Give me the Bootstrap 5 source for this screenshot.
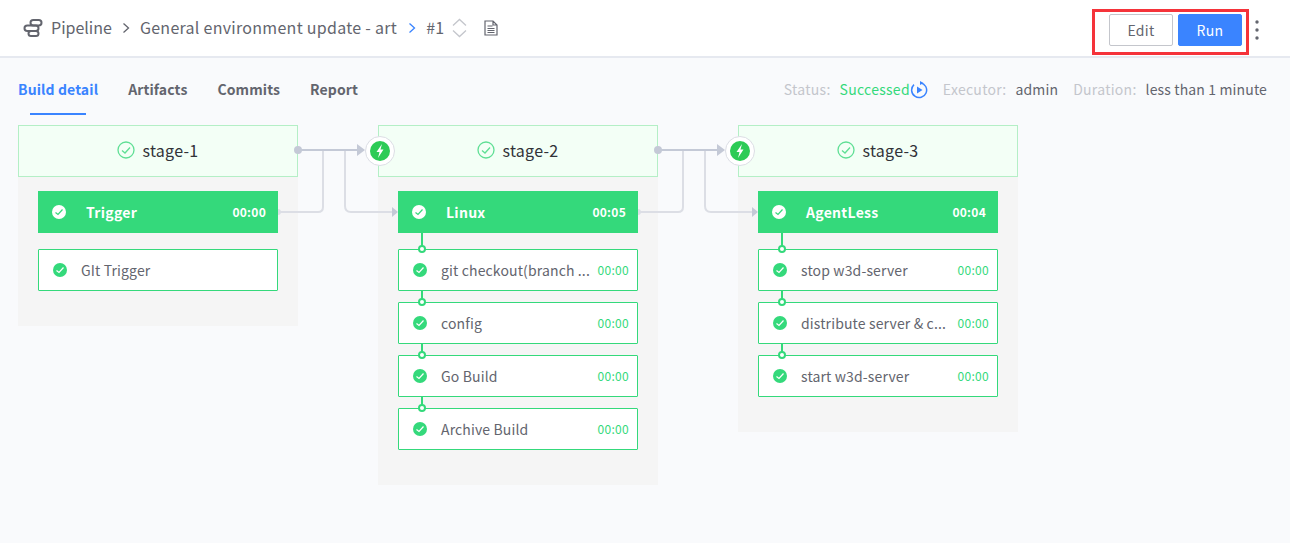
<!DOCTYPE html>
<html lang="en">
<head>
<meta charset="utf-8">
<title>Pipeline build</title>
<link href="https://cdn.jsdelivr.net/npm/bootstrap@5.3.0/dist/css/bootstrap.min.css" rel="stylesheet">
<script src="https://cdn.jsdelivr.net/npm/bootstrap@5.3.0/dist/js/bootstrap.bundle.min.js"></script>
<style>
html,body{height:100%;overflow:hidden}
body{font-family:"Noto Sans CJK SC","Noto Sans",sans-serif;background:#f9fafc;color:#63656e;font-size:14px;letter-spacing:.02em}
.topbar{height:58px;background:#fff;border-bottom:2px solid #e6e9f0;padding:0 31px 0 23px}
.crumb{font-size:16px;color:#63656e;line-height:24px;margin-top:-3px}
.crumb-root{letter-spacing:0}
.crumb-sep{margin:0 9px 0 9px;flex:none}
.crumb-sep-active{margin-left:10px}
.action-box{border:3px solid #f5333a;height:46px;width:157px;padding:0 4px 4px 14px;margin-top:8px;gap:5px}
.act-btn{height:32px;width:64px;padding:0;font-size:14px;border-radius:2px;line-height:28px;letter-spacing:.02em}
.act-edit{background:#fff;border:1px solid #c4c6cc;color:#63656e}
.act-run{background:#3a84ff;border:1px solid #3a84ff;color:#fff}
.act-edit:hover{background:#fff;border-color:#c4c6cc;color:#63656e}
.act-run:hover{background:#3a84ff;border-color:#3a84ff;color:#fff}
.tabrow{height:67px;padding:0 23px 0 18px}
.tab-link{font-size:14px;font-weight:700;color:#63656e;position:relative;height:57px;line-height:62px;margin-right:30px;letter-spacing:.008em}
.tab-active{color:#3a84ff}
.tab-active::after{content:"";position:absolute;left:12px;right:12px;bottom:0;height:2px;background:#3a84ff}
.meta-row{margin-top:21px}
.meta-label{color:#c4c6cc}
.meta-gap{margin-left:15px}
.meta-ok{color:#34d97b;margin-left:9px}
.meta-val{margin-left:9px;letter-spacing:.01em}
.canvas{padding-left:18px;gap:80px;align-items:flex-start}
.stage-col{width:280px;background:#f5f5f5;position:relative;padding-bottom:24px}
.stage-head{height:52px;background:#f3fff6;border:1px solid #b4efc6;font-size:16px;color:#313238;gap:7px;padding-bottom:2px}
.job-bar{height:42px;background:#34d97b;color:#fff;margin:14px 20px 16px;font-weight:700;padding:0 12px 0 14px;position:relative}
.job-name{margin-left:20px;font-size:14px}
.job-time{font-size:12px;margin-left:auto}
.task-item{height:42px;background:#fff;border:1px solid #34d97b;border-radius:1px;margin:0 20px 11px;padding:0 8px 0 14px;position:relative}
.task-name{margin-left:14px;white-space:nowrap;font-size:14px;letter-spacing:.01em}
.task-time{font-size:12px;color:#34d97b;margin-left:auto}
.task-link::before{content:"";position:absolute;left:22px;top:-12px;width:2px;height:12px;background:#34d97b}
.job-bar + .task-link::before{top:-17px;height:17px}
.task-link::after{content:"";position:absolute;left:19px;top:-5px;width:8px;height:8px;border:2px solid #34d97b;border-radius:50%;background:#fff}
.wire{position:absolute;left:280px;top:0;overflow:visible;pointer-events:none;z-index:1}
.job-wire{position:absolute;left:-20px;top:11px;overflow:visible;z-index:2}
.pipe-ico,.doc-ico,.sort-ico,.dots-ico{flex:none}
.sort-ico{margin-left:8px}
.doc-ico{margin-left:17px}
.dots-ico{margin-left:6px;margin-top:4px}
</style>
</head>
<body>
<header class="topbar d-flex align-items-center">
  <svg class="pipe-ico" width="20" height="20" viewBox="0 0 20 20" fill="none" stroke="#63656e" stroke-width="2"><rect x="7.500" y="2" width="11" height="5.500" rx="2.750"/><rect x="1.500" y="7.500" width="14" height="5.500" rx="2.750"/><rect x="5.500" y="13" width="10" height="5" rx="2.500"/></svg>
  <span class="crumb crumb-root ms-2">Pipeline</span>
  <svg class="crumb-sep" width="10" height="12" viewBox="0 0 10 12" fill="none" stroke="#63656e" stroke-width="1.300"><path d="M2.500 1.500 7.500 6 2.500 10.500"/></svg>
  <span class="crumb">General environment update - art</span>
  <svg class="crumb-sep crumb-sep-active" width="10" height="12" viewBox="0 0 10 12" fill="none" stroke="#3a84ff" stroke-width="1.300"><path d="M2.500 1.500 7.500 6 2.500 10.500"/></svg>
  <span class="crumb">#1</span>
  <svg class="sort-ico" width="15" height="20" viewBox="0 0 15 20" fill="none" stroke="#c4c6cc" stroke-width="1.300"><path d="M1 7.500 7.500 1.500 14 7.500M1 12.500 7.500 18.500 14 12.500"/></svg>
  <svg class="doc-ico" width="14" height="16" viewBox="0 0 14 16" fill="none" stroke="#63656e" stroke-width="1.200"><path d="M1 1h8l4 4v10H1zM9 1v4h4M3.500 6h5M3.500 8.500h7M3.500 10.500h7M3.500 12.500h7"/></svg>
  <div class="ms-auto d-flex align-items-center">
    <div class="action-box d-flex align-items-center">
      <button type="button" class="btn act-btn act-edit">Edit</button>
      <button type="button" class="btn act-btn act-run">Run</button>
    </div>
    <svg class="dots-ico" width="4" height="20" viewBox="0 0 4 20" fill="#63656e"><circle cx="2" cy="2" r="1.700"/><circle cx="2" cy="10" r="1.700"/><circle cx="2" cy="18" r="1.700"/></svg>
  </div>
</header>
<div class="tabrow d-flex justify-content-between align-items-start">
  <nav class="d-flex">
    <a class="tab-link tab-active text-decoration-none" href="#">Build detail</a>
    <a class="tab-link text-decoration-none" href="#">Artifacts</a>
    <a class="tab-link text-decoration-none" href="#">Commits</a>
    <a class="tab-link text-decoration-none" href="#">Report</a>
  </nav>
  <div class="d-flex align-items-center meta-row">
    <span class="meta-label">Status:</span>
    <span class="meta-ok">Successed</span>
    <svg width="18" height="18" viewBox="0 0 18 18" fill="none"><path d="M10.500 1.700A7.500 7.500 0 1 1 4 3.600" stroke="#3a84ff" stroke-width="1.500"/><path d="M10 0 13.500 2 10 4z" fill="#3a84ff"/><path d="M7 5.500 12.500 9 7 12.500z" fill="#3a84ff"/></svg>
    <span class="meta-label meta-gap">Executor:</span>
    <span class="meta-val">admin</span>
    <span class="meta-label meta-gap">Duration:</span>
    <span class="meta-val">less than 1 minute</span>
  </div>
</div>
<main class="canvas d-flex">
  <section class="stage-col">
    <div class="stage-head d-flex align-items-center justify-content-center"><svg width="18" height="18" viewBox="0 0 18 18" fill="none" stroke="#5fdf95" stroke-width="1.300"><circle cx="9" cy="9" r="8"/><path d="M5 9.500 8 12 13 6.500"/></svg>stage-1</div>
    <div class="job-bar d-flex align-items-center"><svg width="14" height="14" viewBox="0 0 14 14"><circle cx="7" cy="7" r="7" fill="#fff"/><path d="M3.500 7.500 6 9.500 10.500 4.500" fill="none" stroke="#34d97b" stroke-width="1.200"/></svg><span class="job-name">Trigger</span><span class="job-time">00:00</span></div>
    <div class="task-item d-flex align-items-center"><svg width="14" height="14" viewBox="0 0 14 14"><circle cx="7" cy="7" r="7" fill="#34d97b"/><path d="M3.500 7.500 6 9.500 10.500 4.500" fill="none" stroke="#fff" stroke-width="1.200"/></svg><span class="task-name">GIt Trigger</span></div>
    <svg class="wire" width="100" height="100" fill="none">
      <path d="M-20 84a3 3 0 0 1 0 6z" fill="#dcdee5"/>
      <path d="M-20 87H20Q25 87 25 82V25" stroke="#dcdee5" stroke-width="2"/>
      <path d="M47 25V81Q47 87 53 87H94" stroke="#dcdee5" stroke-width="2"/>
      <circle cx="0" cy="25" r="4" fill="#c4c9d6"/>
      <path d="M0 25H60" stroke="#c4c9d6" stroke-width="2"/>
      <path d="M59 19 67 25 59 31z" fill="#c4c9d6"/>
      <path d="M94 82 100 87 94 92z" fill="#c4c9d6"/>
    </svg>
  </section>
  <section class="stage-col">
    <div class="stage-head d-flex align-items-center justify-content-center"><svg width="18" height="18" viewBox="0 0 18 18" fill="none" stroke="#5fdf95" stroke-width="1.300"><circle cx="9" cy="9" r="8"/><path d="M5 9.500 8 12 13 6.500"/></svg>stage-2</div>
    <div class="job-bar d-flex align-items-center"><svg width="14" height="14" viewBox="0 0 14 14"><circle cx="7" cy="7" r="7" fill="#fff"/><path d="M3.500 7.500 6 9.500 10.500 4.500" fill="none" stroke="#34d97b" stroke-width="1.200"/></svg><span class="job-name">Linux</span><span class="job-time">00:05</span></div>
    <div class="task-item task-link d-flex align-items-center"><svg width="14" height="14" viewBox="0 0 14 14"><circle cx="7" cy="7" r="7" fill="#34d97b"/><path d="M3.500 7.500 6 9.500 10.500 4.500" fill="none" stroke="#fff" stroke-width="1.200"/></svg><span class="task-name">git checkout(branch ...</span><span class="task-time">00:00</span></div>
    <div class="task-item task-link d-flex align-items-center"><svg width="14" height="14" viewBox="0 0 14 14"><circle cx="7" cy="7" r="7" fill="#34d97b"/><path d="M3.500 7.500 6 9.500 10.500 4.500" fill="none" stroke="#fff" stroke-width="1.200"/></svg><span class="task-name">config</span><span class="task-time">00:00</span></div>
    <div class="task-item task-link d-flex align-items-center"><svg width="14" height="14" viewBox="0 0 14 14"><circle cx="7" cy="7" r="7" fill="#34d97b"/><path d="M3.500 7.500 6 9.500 10.500 4.500" fill="none" stroke="#fff" stroke-width="1.200"/></svg><span class="task-name">Go Build</span><span class="task-time">00:00</span></div>
    <div class="task-item task-link d-flex align-items-center"><svg width="14" height="14" viewBox="0 0 14 14"><circle cx="7" cy="7" r="7" fill="#34d97b"/><path d="M3.500 7.500 6 9.500 10.500 4.500" fill="none" stroke="#fff" stroke-width="1.200"/></svg><span class="task-name">Archive Build</span><span class="task-time">00:00</span></div>
    <svg class="wire" width="100" height="100" fill="none">
      <path d="M-20 84a3 3 0 0 1 0 6z" fill="#dcdee5"/>
      <path d="M-20 87H20Q25 87 25 82V25" stroke="#dcdee5" stroke-width="2"/>
      <path d="M47 25V81Q47 87 53 87H94" stroke="#dcdee5" stroke-width="2"/>
      <circle cx="0" cy="25" r="4" fill="#c4c9d6"/>
      <path d="M0 25H60" stroke="#c4c9d6" stroke-width="2"/>
      <path d="M59 19 67 25 59 31z" fill="#c4c9d6"/>
      <path d="M94 82 100 87 94 92z" fill="#c4c9d6"/>
    </svg>
    <svg class="job-wire" width="30" height="30" fill="none"><circle cx="22" cy="15" r="14.500" fill="#fff" stroke="#dcdee5"/><circle cx="22" cy="15" r="10" fill="#2dcb56"/><path d="M24 8 18.500 16h3L20 22l5.500-8.500h-3z" fill="#fff"/></svg>
  </section>
  <section class="stage-col">
    <div class="stage-head d-flex align-items-center justify-content-center"><svg width="18" height="18" viewBox="0 0 18 18" fill="none" stroke="#5fdf95" stroke-width="1.300"><circle cx="9" cy="9" r="8"/><path d="M5 9.500 8 12 13 6.500"/></svg>stage-3</div>
    <div class="job-bar d-flex align-items-center"><svg width="14" height="14" viewBox="0 0 14 14"><circle cx="7" cy="7" r="7" fill="#fff"/><path d="M3.500 7.500 6 9.500 10.500 4.500" fill="none" stroke="#34d97b" stroke-width="1.200"/></svg><span class="job-name">AgentLess</span><span class="job-time">00:04</span></div>
    <div class="task-item task-link d-flex align-items-center"><svg width="14" height="14" viewBox="0 0 14 14"><circle cx="7" cy="7" r="7" fill="#34d97b"/><path d="M3.500 7.500 6 9.500 10.500 4.500" fill="none" stroke="#fff" stroke-width="1.200"/></svg><span class="task-name">stop w3d-server</span><span class="task-time">00:00</span></div>
    <div class="task-item task-link d-flex align-items-center"><svg width="14" height="14" viewBox="0 0 14 14"><circle cx="7" cy="7" r="7" fill="#34d97b"/><path d="M3.500 7.500 6 9.500 10.500 4.500" fill="none" stroke="#fff" stroke-width="1.200"/></svg><span class="task-name">distribute server &amp; c...</span><span class="task-time">00:00</span></div>
    <div class="task-item task-link d-flex align-items-center"><svg width="14" height="14" viewBox="0 0 14 14"><circle cx="7" cy="7" r="7" fill="#34d97b"/><path d="M3.500 7.500 6 9.500 10.500 4.500" fill="none" stroke="#fff" stroke-width="1.200"/></svg><span class="task-name">start w3d-server</span><span class="task-time">00:00</span></div>
    <svg class="job-wire" width="30" height="30" fill="none"><circle cx="22" cy="15" r="14.500" fill="#fff" stroke="#dcdee5"/><circle cx="22" cy="15" r="10" fill="#2dcb56"/><path d="M24 8 18.500 16h3L20 22l5.500-8.500h-3z" fill="#fff"/></svg>
  </section>
</main>
</body>
</html>
